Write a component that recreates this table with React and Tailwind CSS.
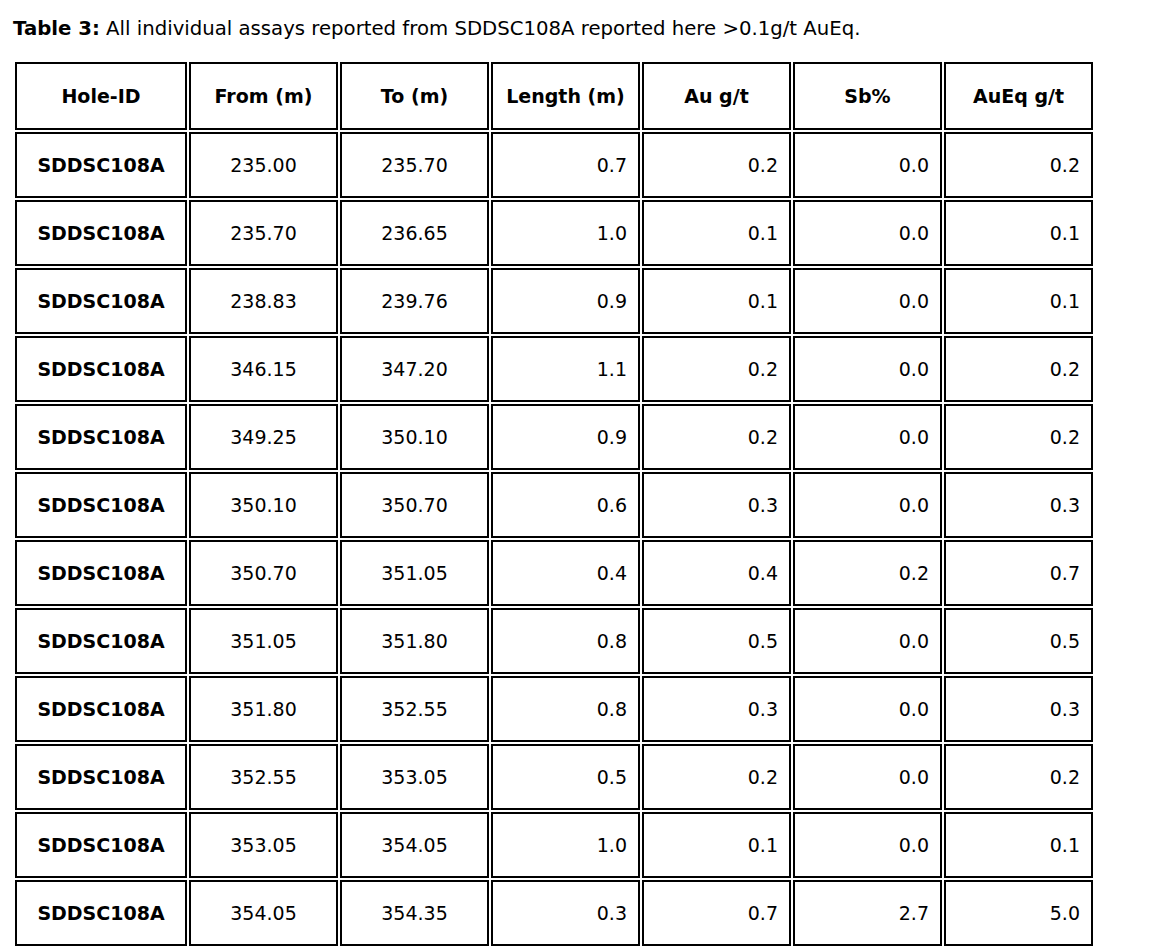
const rows = [
  ['235.00', '235.70', '0.7', '0.2', '0.0', '0.2'],
  ['235.70', '236.65', '1.0', '0.1', '0.0', '0.1'],
  ['238.83', '239.76', '0.9', '0.1', '0.0', '0.1'],
  ['346.15', '347.20', '1.1', '0.2', '0.0', '0.2'],
  ['349.25', '350.10', '0.9', '0.2', '0.0', '0.2'],
  ['350.10', '350.70', '0.6', '0.3', '0.0', '0.3'],
  ['350.70', '351.05', '0.4', '0.4', '0.2', '0.7'],
  ['351.05', '351.80', '0.8', '0.5', '0.0', '0.5'],
  ['351.80', '352.55', '0.8', '0.3', '0.0', '0.3'],
  ['352.55', '353.05', '0.5', '0.2', '0.0', '0.2'],
  ['353.05', '354.05', '1.0', '0.1', '0.0', '0.1'],
  ['354.05', '354.35', '0.3', '0.7', '2.7', '5.0'],
];

const headers = ['Hole-ID', 'From (m)', 'To (m)', 'Length (m)', 'Au g/t', 'Sb%', 'AuEq g/t'];

export default function App() {
  return (
    <div className="min-h-screen bg-white text-black px-[13px] font-['DejaVu_Sans',Verdana,sans-serif] text-[19px]">
      <p className="pt-[18px] leading-[22px] text-[19.7px]">
        <span className="font-bold">Table 3:</span> All individual assays reported from SDDSC108A reported here &gt;0.1g/t AuEq.
      </p>

      <table className="mt-[20px] border-separate border-spacing-[2px] table-fixed w-[1082px]">
        <colgroup>
          <col className="w-[172px]" />
          <col className="w-[149px]" />
          <col className="w-[149px]" />
          <col className="w-[149px]" />
          <col className="w-[149px]" />
          <col className="w-[149px]" />
          <col className="w-[149px]" />
        </colgroup>
        <thead>
          <tr>
            {headers.map((h) => (
              <th key={h} className="h-[68px] border-2 border-black text-center font-bold p-0">
                {h}
              </th>
            ))}
          </tr>
        </thead>
        <tbody>
          {rows.map((r, i) => (
            <tr key={i}>
              <td className="h-[66px] border-2 border-black text-center font-bold p-0">SDDSC108A</td>
              <td className="border-2 border-black text-center p-0">{r[0]}</td>
              <td className="border-2 border-black text-center p-0">{r[1]}</td>
              <td className="border-2 border-black text-right pr-[11px]">{r[2]}</td>
              <td className="border-2 border-black text-right pr-[11px]">{r[3]}</td>
              <td className="border-2 border-black text-right pr-[11px]">{r[4]}</td>
              <td className="border-2 border-black text-right pr-[11px]">{r[5]}</td>
            </tr>
          ))}
        </tbody>
      </table>
    </div>
  );
}
